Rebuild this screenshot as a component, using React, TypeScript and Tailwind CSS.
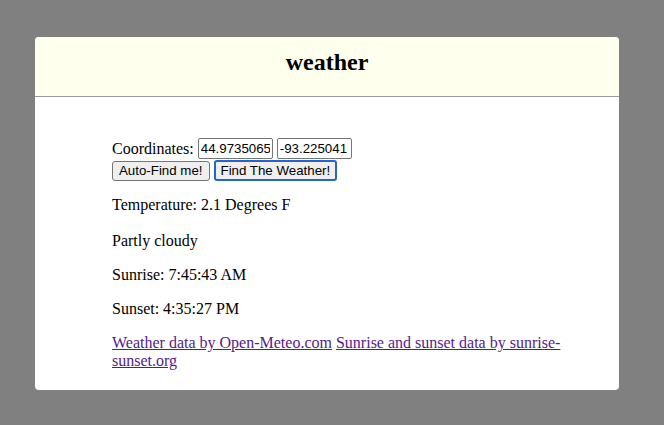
import React from "react";

export default function App() {
  return (
    <div className="min-h-[425px] w-full bg-[#808080] pt-[37px] pl-[35px]" style={{ fontFamily: '"Liberation Serif", "Times New Roman", serif' }}>
      <div className="w-[584px] rounded-[4px] bg-white overflow-hidden">
        <div className="h-[60px] bg-[#ffffee] border-b border-[#999999] flex items-center justify-center">
          <h1 className="text-[24px] font-bold text-black leading-none -mt-[9px]">weather</h1>
        </div>
        <div className="pl-[77px] pt-[41px] pb-[20px] w-[557px] text-[16px] leading-[18px] text-black">
          <div className="flex items-center h-[21px]">
            <span className="mr-[4px]">Coordinates:</span>
            <input
              readOnly
              value="44.97350655"
              className="w-[75px] h-[21px] border border-[#767676] rounded-[2px] px-[2px] text-[13.3px] text-black bg-white outline-none"
              style={{ fontFamily: '"Liberation Sans", Arial, sans-serif' }}
            />
            <input
              readOnly
              value="-93.225041"
              className="ml-[4px] w-[75px] h-[21px] border border-[#767676] rounded-[2px] px-[2px] text-[13.3px] text-black bg-white outline-none"
              style={{ fontFamily: '"Liberation Sans", Arial, sans-serif' }}
            />
          </div>
          <div className="flex items-center mt-[1px] h-[21px]">
            <button
              className="h-[20px] px-[6px] border border-[#767676] rounded-[3px] bg-[#efefef] text-[13.3px] text-black leading-none"
              style={{ fontFamily: '"Liberation Sans", Arial, sans-serif' }}
            >
              Auto-Find me!
            </button>
            <button
              className="ml-[4px] h-[21px] px-[5px] border-2 border-[#2563d0] rounded-[3px] bg-[#efefef] text-[13.3px] text-black leading-none"
              style={{ fontFamily: '"Liberation Sans", Arial, sans-serif' }}
            >
              Find The Weather!
            </button>
          </div>
          <p className="mt-[15px]">Temperature: 2.1 Degrees F</p>
          <p className="mt-[18px]">Partly cloudy</p>
          <p className="mt-[16px]">Sunrise: 7:45:43 AM</p>
          <p className="mt-[16px]">Sunset: 4:35:27 PM</p>
          <p className="mt-[16px] w-[480px]">
            <a href="#" className="text-[#551a8b] underline">Weather data by Open-Meteo.com</a>{" "}
            <a href="#" className="text-[#551a8b] underline">Sunrise and sunset data by sunrise-sunset.org</a>
          </p>
        </div>
      </div>
    </div>
  );
}
